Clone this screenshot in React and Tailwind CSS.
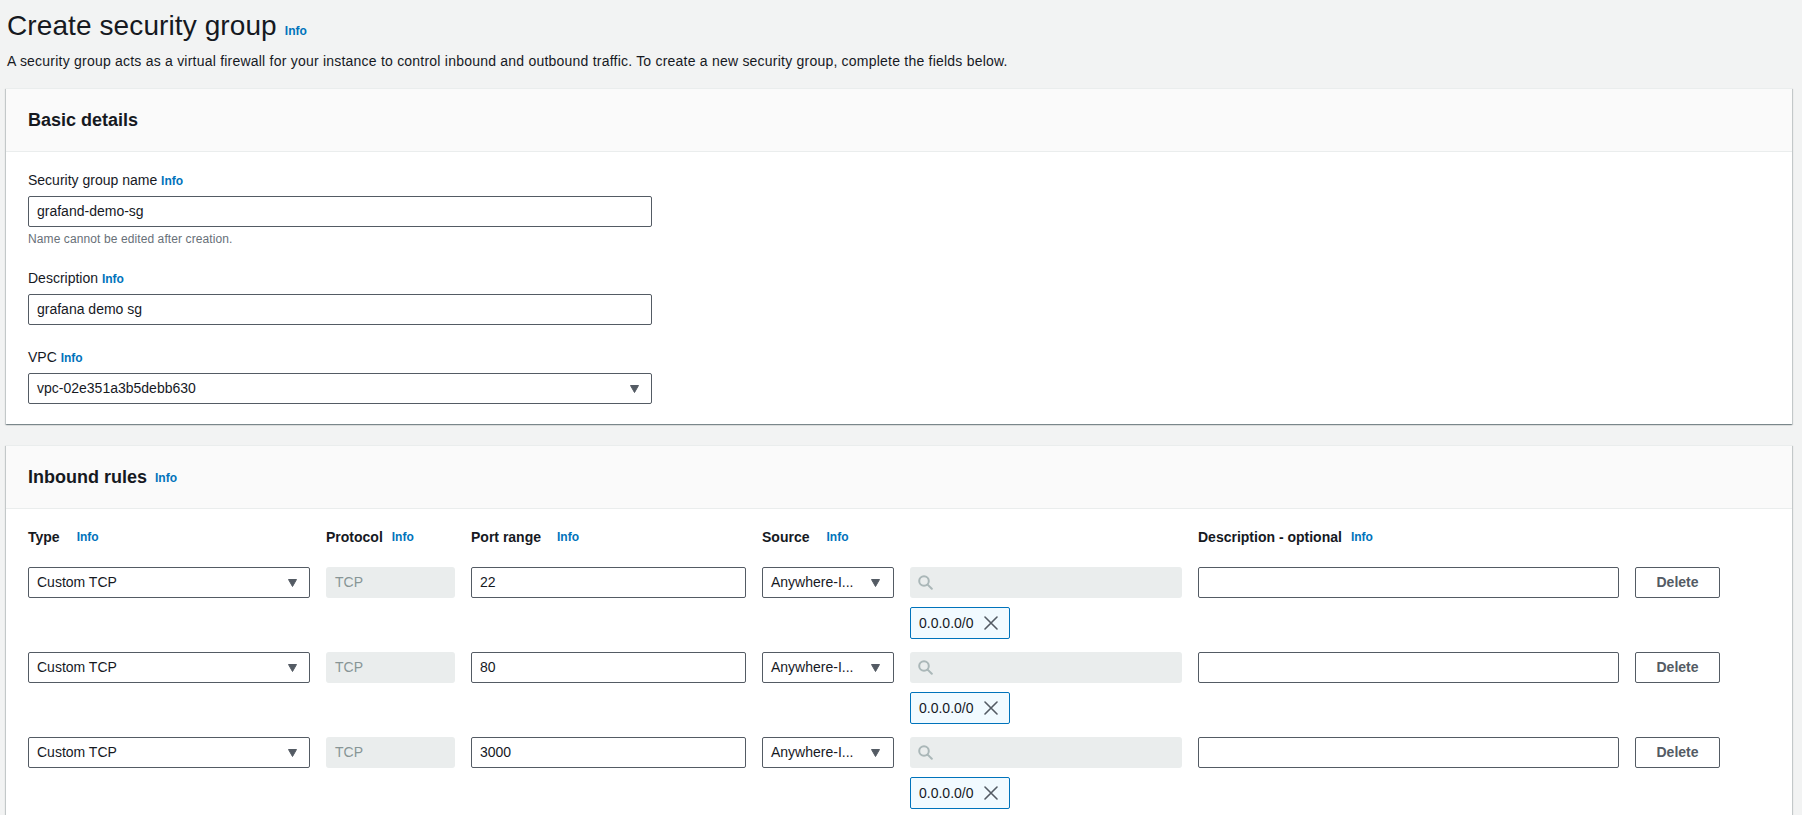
import React from "react";

function Info({ className = "" }) {
  return <span className={"text-[12px] font-bold text-[#0073bb] " + className}>Info</span>;
}

function Caret() {
  return (
    <svg width="9" height="8" viewBox="0 0 9 8" className="shrink-0">
      <path d="M0.5 0.5h8L4.5 7.5z" fill="#545b64" stroke="#545b64" strokeWidth="1" strokeLinejoin="round" />
    </svg>
  );
}

function XIcon() {
  return (
    <svg width="14" height="14" viewBox="0 0 14 14" className="shrink-0">
      <path d="M1 1L13 13M13 1L1 13" stroke="#545b64" strokeWidth="1.6" strokeLinecap="round" />
    </svg>
  );
}

function SearchIcon() {
  return (
    <svg width="15" height="15" viewBox="0 0 15 15" className="shrink-0">
      <circle cx="6" cy="6" r="4.8" fill="none" stroke="#aab7b8" strokeWidth="2" />
      <path d="M9.6 9.6L13.8 13.8" stroke="#aab7b8" strokeWidth="2" strokeLinecap="round" />
    </svg>
  );
}

function TextInput({ value, className = "" }) {
  return (
    <div className={"h-[31px] border border-[#545b64] rounded-[2px] bg-white flex items-center pl-[8px] text-[14px] text-[#16191f] " + className}>
      {value}
    </div>
  );
}

function Select({ value, className = "" }) {
  return (
    <div className={"h-[31px] border border-[#545b64] rounded-[2px] bg-white flex items-center justify-between pl-[8px] pr-[12px] text-[14px] text-[#16191f] " + className}>
      <span className="whitespace-nowrap">{value}</span>
      <Caret />
    </div>
  );
}

const cardShadow =
  "shadow-[0_1px_1px_0_rgba(0,28,36,0.3),1px_1px_1px_0_rgba(0,28,36,0.15),-1px_1px_1px_0_rgba(0,28,36,0.15)]";

function Rule({ port, first }) {
  return (
    <div className={"grid grid-cols-[282px_129px_275px_132px_272px_421px_85px] gap-x-4 items-start " + (first ? "mt-[20px]" : "mt-[13px]")}>
      <Select value="Custom TCP" />
      <div className="h-[31px] rounded-[3px] bg-[#eaeded] flex items-center pl-[9px] text-[14px] text-[#879596]">TCP</div>
      <TextInput value={port} />
      <Select value="Anywhere-I..." className="pr-[13px]" />
      <div className="flex flex-col items-start">
        <div className="h-[31px] w-full rounded-[3px] bg-[#eaeded] flex items-center pl-[8px]">
          <SearchIcon />
        </div>
        <div className="mt-[9px] h-[32px] w-[100px] border border-[#0073bb] rounded-[2px] bg-[#f1faff] flex items-center pl-[8px] gap-[10px] text-[14px] text-[#16191f]">
          <span>0.0.0.0/0</span>
          <XIcon />
        </div>
      </div>
      <TextInput value="" />
      <div className="h-[31px] border border-[#545b64] rounded-[2px] bg-white flex items-center justify-center text-[14px] font-bold text-[#545b64]">
        Delete
      </div>
    </div>
  );
}

export default function App() {
  return (
    <div className="h-[815px] overflow-hidden bg-[#f2f3f3] pl-[6px] pr-[10px] font-['Liberation_Sans',Arial,sans-serif] text-[#16191f]">
      <div className="pt-[8px] pl-[1px] flex items-baseline">
        <h1 className="text-[28px] leading-[36px] font-normal tracking-[0.1px]">Create security group</h1>
        <Info className="ml-[8px]" />
      </div>
      <p className="mt-[7px] pl-[1px] text-[14px] leading-[20px] tracking-[0.22px]">
        A security group acts as a virtual firewall for your instance to control inbound and outbound traffic. To create a new security group, complete the fields below.
      </p>

      <div className={"mt-[17px] bg-white border-t border-[#eaeded] " + cardShadow}>
        <div className="h-[63px] bg-[#fafafa] border-b border-[#eaeded] flex items-center px-[22px]">
          <h2 className="text-[18px] leading-[22px] font-bold">Basic details</h2>
        </div>
        <div className="px-[22px] pt-[18px] pb-[20px]">
          <div className="text-[14px] leading-[20px]">
            Security group name <Info />
          </div>
          <TextInput value="grafand-demo-sg" className="mt-[5px] w-[624px]" />
          <div className="mt-[4px] text-[12px] leading-[16px] text-[#687078] tracking-[0.1px]">Name cannot be edited after creation.</div>

          <div className="mt-[21px] text-[14px] leading-[20px]">
            Description <Info />
          </div>
          <TextInput value="grafana demo sg" className="mt-[5px] w-[624px]" />

          <div className="mt-[22px] text-[14px] leading-[20px]">
            VPC <Info />
          </div>
          <Select value="vpc-02e351a3b5debb630" className="mt-[5px] w-[624px]" />
        </div>
      </div>

      <div className={"mt-[21px] bg-white border-t border-[#eaeded] " + cardShadow}>
        <div className="h-[63px] bg-[#fafafa] border-b border-[#eaeded] flex items-center px-[22px]">
          <h2 className="text-[18px] leading-[22px] font-bold">Inbound rules</h2>
          <Info className="ml-[8px] mt-[2px]" />
        </div>
        <div className="px-[22px] pt-[18px] pb-[30px]">
          <div className="grid grid-cols-[282px_129px_275px_132px_272px_421px_85px] gap-x-4 text-[14px] leading-[20px] font-bold">
            <div className="flex items-center">
              <span>Type</span>
              <Info className="ml-[17px]" />
            </div>
            <div className="flex items-center">
              <span>Protocol</span>
              <Info className="ml-[9px]" />
            </div>
            <div className="flex items-center">
              <span>Port range</span>
              <Info className="ml-[16px]" />
            </div>
            <div className="flex items-center col-span-2">
              <span>Source</span>
              <Info className="ml-[17px]" />
            </div>
            <div className="flex items-center col-span-2">
              <span>Description - optional</span>
              <Info className="ml-[9px]" />
            </div>
          </div>
          <Rule port="22" first />
          <Rule port="80" />
          <Rule port="3000" />
        </div>
      </div>
    </div>
  );
}
